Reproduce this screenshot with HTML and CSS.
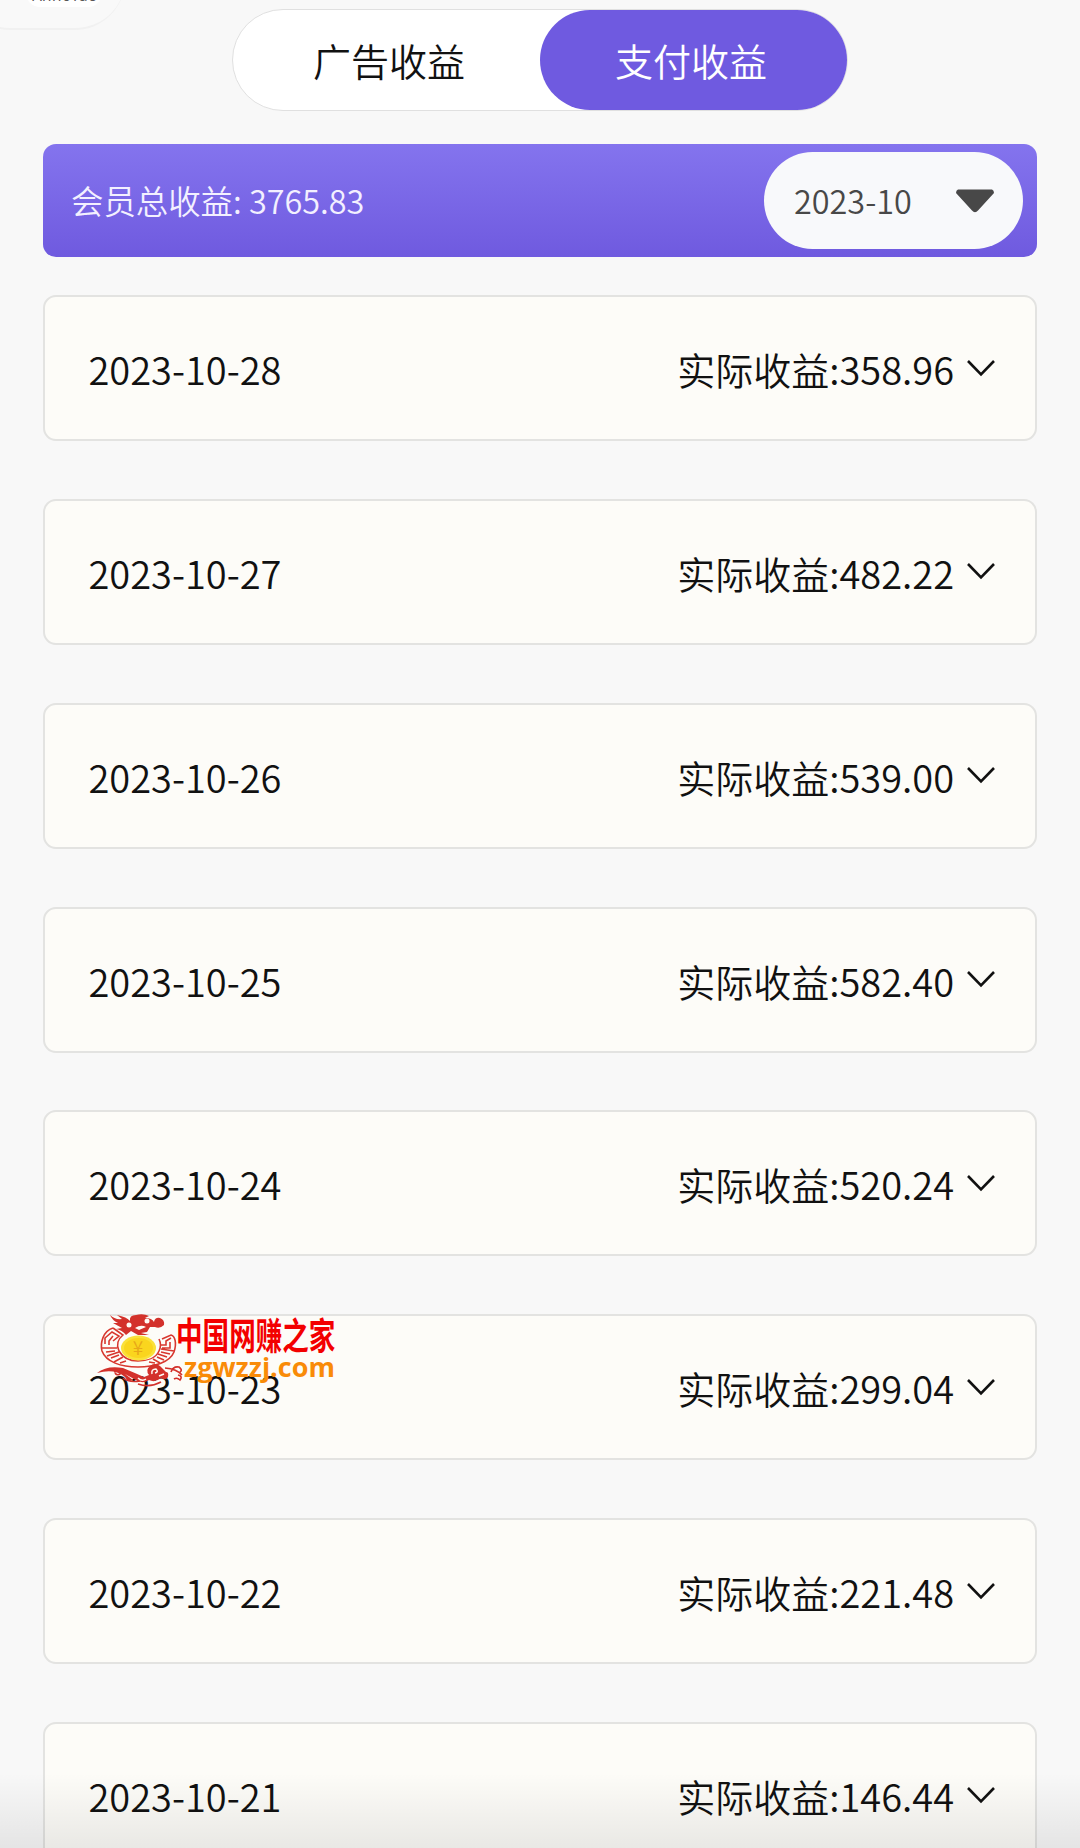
FILE: index.html
```html
<!DOCTYPE html>
<html lang="zh-CN">
<head>
    <meta charset="UTF-8">
    <meta name="viewport" content="width=device-width, initial-scale=1.0">
    <title>支付收益</title>
    <link rel="stylesheet" href="styles.css">
</head>
<body>
    <div class="float-card">
        <div class="float-pill">Аннотас</div>
    </div>
    <div class="tabs">
        <div class="tab">广告收益</div>
        <div class="tab active">支付收益</div>
    </div>
    <div class="summary">
        <span class="total">会员总收益: 3765.83</span>
        <div class="month">
            <span class="total">2023-10</span>
            <svg class="caret" viewBox="0 0 38 24"><path d="M2 0.500H36Q38 1 38 4L22 21.500Q19 25 16 21.500L0 4Q0 1 2 0.500Z"/></svg>
        </div>
    </div>
    <div class="list" id="list"></div>
    <div class="watermark">
        <svg class="logo" viewBox="0 0 90 80">
            <!-- ring -->
            <g fill="none" stroke="#d8382f" stroke-width="1.600">
                <path d="M18 20C8 23 5 35 7 43C11 54 26 59 43 59C60 59 75 54 79 44C82 35 80 28 76 27L67 31"/>
                <path d="M18 20L28 27C23 31 21 37 24 43C28 50 35 53 43 53C52 53 61 50 64 43C66 39 66 35 64 31"/>
                <path d="M10 36V30L17 24L24 28L18 33M14 37V33L18 28M7 40H22M11 44L20 43M12 48L24 44M16 50L24 47M19 54L28 49M25 55L31 53M76 30L71 33V37H66M75 34V40H67M79 43L66 41M75 46L66 44M72 49L63 46M69 52L62 49M65 55L58 51M60 55L54 54"/>
            </g>
            <ellipse cx="43.500" cy="40" rx="17.500" ry="12.500" fill="#fae13a"/>
            <ellipse cx="43.500" cy="40" rx="14.500" ry="10" fill="#fad51e"/>
            <text class="coin" x="43" y="47" text-anchor="middle">¥</text>
            <!-- dragon head -->
            <path fill="#d3312b" d="M15 7Q20 12 27 11L22 7Q32 9 35 13Q34 7 41 7Q48 5 54 8L50 10Q57 10 59 14Q60 9 65 10Q70 12 69 17Q65 21 60 19L55 19L52 24L46 25L54 27L43 27L36 23L31 27Q27 22 21 21L27 20L18 15L23 15Q17 12 15 7Z"/>
            <g fill="#fffaf5">
                <circle cx="34" cy="17" r="2.500"/>
                <circle cx="52" cy="13" r="2.500"/>
                <path d="M40 20Q46 16 51 19L44 22Z"/>
            </g>
            <!-- clouds -->
            <path fill="#d3312b" d="M2 65Q12 57 28 60Q40 65 49 69L54 67Q50 62 55 58Q60 54 65 58L71 64Q74 64 73 69Q71 73 66 70Q60 75 54 72Q47 77 39 71L30 66L38 72Q33 75 30 69Q20 60 2 65Z"/>
            <g fill="none" stroke="#d3312b" stroke-width="1.600">
                <path d="M19 64Q26 61 25 66Q22 68 20 65M28 70Q34 75 45 73M43 76Q55 80 66 74M70 60Q82 61 87 67M76 64Q78 58 84 59Q88 62 85 64M79 71Q82 69 85 72Q88 68 83 67"/>
            </g>
            <g fill="none" stroke="#fffaf5" stroke-width="1.500">
                <path d="M57 66Q56 61 61 61Q64 64 60 65M64 68L69 66M43 70Q47 74 51 71"/>
            </g>
        </svg>
        <div class="site">
            <div class="site-name">中国网赚之家</div>
            <div class="site-url">zgwzzj.com</div>
        </div>
    </div>
    <div class="bottom-shade"></div>
    <script>
        const list = document.getElementById("list");
        const rows = [
            ["2023-10-28", "358.96"],
            ["2023-10-27", "482.22"],
            ["2023-10-26", "539.00"],
            ["2023-10-25", "582.40"],
            ["2023-10-24", "520.24"],
            ["2023-10-23", "299.04"],
            ["2023-10-22", "221.48"],
            ["2023-10-21", "146.44"]
        ];

        rows.forEach(([date, amount]) => {
            list.innerHTML += `
                <div class="row">
                    <span>${date}</span>
                    <div class="amount">
                        <span>实际收益:${amount}</span>
                        <svg class="chevron" viewBox="0 0 28 17"><path d="M1 1L14 14.500L27 1"/></svg>
                    </div>
                </div>`;
        });
    </script>
</body>
</html>
```
FILE: styles.css
```css
* {
    box-sizing: border-box;
}
body {
    margin: 0;
    padding: 9px 43px 0;
    height: 1848px;
    overflow: hidden;
    position: relative;
    background: #f8f8f8;
    color: #111;
    font-family: "Noto Sans CJK SC", sans-serif;
    font-size: 38px;
    font-weight: 350;
}
.tabs {
    display: flex;
    width: 616px;
    height: 102px;
    margin: 0 auto;
    border: 1.5px solid #e0e0e0;
    border-radius: 51px;
    background: #fff;
}
.tab {
    flex: 1;
    display: flex;
    align-items: center;
    justify-content: center;
    padding: 0 0 2px 5px;
    border-radius: 50px;
}
.tab.active {
    padding: 0 5px 2px 0;
    background: #6f5ae0;
    color: #fff;
}
.summary {
    display: flex;
    justify-content: space-between;
    align-items: center;
    height: 113px;
    margin-top: 33px;
    padding: 0 14px 0 28px;
    border-radius: 13px;
    background: linear-gradient(#8474ee, #6f5adf);
    color: #f3f0ff;
    font-size: 32.4px;
}
.total {
    padding-bottom: 3px;
}
.month {
    display: flex;
    align-items: center;
    justify-content: space-between;
    width: 259px;
    height: 97px;
    padding: 0 29px 0 30px;
    border-radius: 49px;
    background: #f8f9fb;
    color: #484848;
}
.caret {
    width: 38px;
    height: 24px;
    fill: #484848;
}
.list {
    display: flex;
    flex-direction: column;
    gap: 57.86px;
    margin-top: 38px;
}
.row {
    display: flex;
    align-items: center;
    justify-content: space-between;
    flex-shrink: 0;
    height: 146px;
    padding: 1px 40px 0 43.5px;
    border: 2px solid #e3e3e1;
    border-radius: 13px;
    background: #fdfcf8;
}
.amount {
    display: flex;
    align-items: center;
    gap: 13px;
}
.chevron {
    width: 28px;
    height: 17px;
    margin-bottom: 1px;
    fill: none;
    stroke: #111;
    stroke-width: 2.6;
}
.float-card {
    position: absolute;
    left: -40px;
    top: -70px;
    width: 165px;
    height: 100px;
    border-bottom: 2px solid #f1f1f1;
    border-radius: 50px;
    background: #f9f9f9;
}
.float-pill {
    position: absolute;
    left: 66px;
    bottom: 21px;
    width: 76px;
    height: 44px;
    border-radius: 14px;
    background: #fff;
    color: #555;
    font-size: 16px;
    line-height: 62px;
    text-align: center;
}
.watermark {
    position: absolute;
    left: 95px;
    top: 1308px;
    display: flex;
}
.logo {
    width: 90px;
    height: 80px;
}
.coin {
    fill: #e8a818;
    font-size: 19px;
}
.site {
    width: 165px;
    margin-left: -9px;
    padding-top: 8px;
    white-space: nowrap;
}
.site-name {
    height: 38px;
    color: #f30000;
    font-size: 37px;
    font-weight: 700;
    line-height: 37px;
    transform: scaleX(0.718);
    transform-origin: left;
}
.site-url {
    padding-left: 8px;
    color: #f98b08;
    font-family: "Open Sans", sans-serif;
    font-size: 27px;
    font-weight: 700;
    line-height: 25px;
}
.bottom-shade {
    position: absolute;
    left: 0;
    right: 0;
    bottom: 0;
    height: 75px;
    background: linear-gradient(rgba(0, 0, 0, 0), rgba(0, 0, 0, 0.08));
}
```
